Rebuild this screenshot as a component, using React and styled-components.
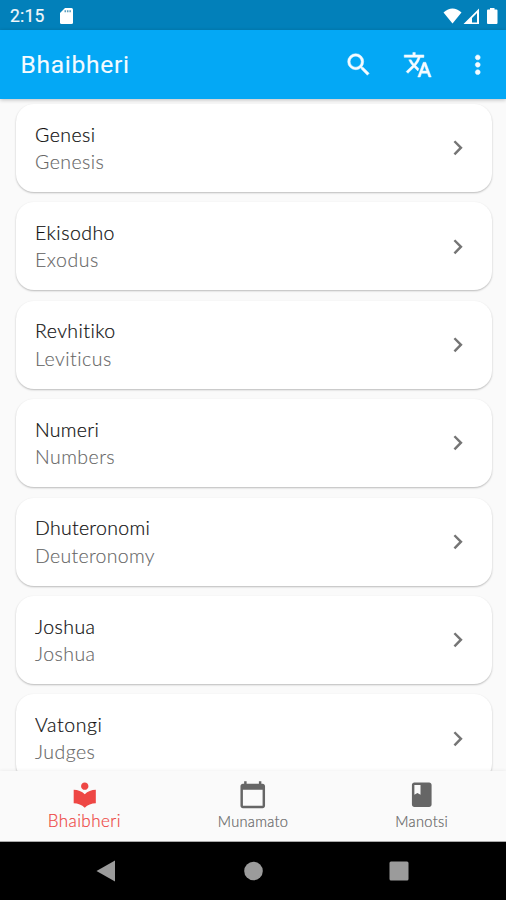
import React from "react";
import styled, { createGlobalStyle } from "styled-components";
import {
  MdSearch, MdTranslate, MdMoreVert, MdChevronRight,
  MdLocalLibrary, MdCalendarToday, MdClass,
} from "react-icons/md";

const GlobalStyle = createGlobalStyle`
  * { box-sizing: border-box; }
  body { margin: 0; background: #fafafa; }
`;

const Screen = styled.div`
  width: 506px;
  height: 900px;
  display: flex;
  flex-direction: column;
  overflow: hidden;
  background: #fafafa;
  font-family: Lato, sans-serif;
`;

const StatusBar = styled.header`
  flex: 0 0 30px;
  display: flex;
  align-items: center;
  padding: 1px 7px 0 10px;
  background: #0280ba;
  color: #f2f8fb;
  svg { display: block; }
`;

const Clock = styled.span`
  width: 50px;
  padding-top: 1px;
  font: 400 17.5px/20px Roboto, sans-serif;
  letter-spacing: 0.2px;
  -webkit-text-stroke: 0.2px currentColor;
`;

const StatusIcons = styled.div`
  display: flex;
  align-items: center;
  margin-left: auto;
`;

const AppBar = styled.div`
  flex: 0 0 69px;
  display: flex;
  align-items: center;
  padding: 0 14px 0 20.5px;
  background: #04a8f5;
  color: #f5fbff;
  position: relative;
  z-index: 1;
  box-shadow: 0 1px 4px rgba(0, 0, 0, 0.24);
`;

const Title = styled.h1`
  flex: 1;
  margin: 0;
  font: 400 24.6px/30px Roboto, sans-serif;
  letter-spacing: 0.7px;
  -webkit-text-stroke: 0.1px currentColor;
`;

const Actions = styled.div`
  display: flex;
  align-items: center;
  gap: 30px;
  svg {
    width: 29.5px;
    height: 29.5px;
    display: block;
  }
  path:not([fill="none"]) {
    stroke: currentColor;
    stroke-width: 0.4px;
  }
  path[fill="none"] { stroke: none; }
`;

const BookList = styled.main`
  flex: 1;
  min-height: 0;
  overflow: hidden;
  display: flex;
  flex-direction: column;
  gap: 10.4px;
  padding: 5px 14.5px 0 15.5px;
`;

const BookCard = styled.article`
  flex: 0 0 88px;
  display: flex;
  align-items: center;
  justify-content: space-between;
  padding: 0 19px 0 19.5px;
  border-radius: 18px;
  background: #fff;
  box-shadow: 0 1px 2px rgba(0, 0, 0, 0.26);
  svg { width: 29.5px; height: 29.5px; color: #757575; }
`;

const BookName = styled.div`
  font-size: 19.5px;
  line-height: 27.4px;
  font-weight: 300;
  color: ${(p) => (p.$muted ? "#666" : "#111")};
  letter-spacing: ${(p) => p.$spacing ?? 0.45}px;
  -webkit-text-stroke: ${(p) => (p.$muted ? 0.12 : 0.2)}px currentColor;
`;

const BottomNav = styled.nav`
  flex: 0 0 71px;
  display: grid;
  grid-template-columns: repeat(3, 1fr);
  background: #fafafa;
  box-shadow: 0 -1px 3px rgba(0, 0, 0, 0.05);
  border-bottom: 1px solid #aaa;
  position: relative;
`;

const NavItem = styled.div`
  display: flex;
  flex-direction: column;
  align-items: center;
  padding-top: 9px;
  color: ${(p) => (p.$active ? "#ee4744" : "#666")};
  svg { width: 29.5px; height: 29.5px; flex: none; }
`;

const NavLabel = styled.span`
  font-size: ${(p) => (p.$active ? 17 : 14.6)}px;
  line-height: ${(p) => (p.$active ? 22 : 24)}px;
  font-weight: 300;
  letter-spacing: ${(p) => (p.$active ? 0.45 : 0.3)}px;
  -webkit-text-stroke: 0.2px currentColor;
`;

const SystemBar = styled.footer`
  flex: 0 0 58px;
  display: flex;
  justify-content: space-between;
  align-items: center;
  padding: 0 97px 0 96px;
  background: #000;
  svg { display: block; }
`;

const books = [
  { name: "Genesi", english: "Genesis" },
  { name: "Ekisodho", english: "Exodus", englishSpacing: 0.5 },
  { name: "Revhitiko", english: "Leviticus", englishSpacing: 0.5 },
  { name: "Numeri", english: "Numbers", spacing: 0.3 },
  { name: "Dhuteronomi", english: "Deuteronomy", spacing: 0.3, englishSpacing: 0.3 },
  { name: "Joshua", english: "Joshua" },
  { name: "Vatongi", english: "Judges", spacing: 0.6 },
];

const tabs = [
  { label: "Bhaibheri", Icon: MdLocalLibrary, active: true },
  { label: "Munamato", Icon: MdCalendarToday },
  { label: "Manotsi", Icon: MdClass },
];

export default function App() {
  return (
    <Screen>
      <GlobalStyle />
      <StatusBar>
        <Clock>2:15</Clock>
        <svg width="13" height="16" viewBox="0 0 13 16">
          <path fill="#fff" d="M5 0h6.500Q13 0 13 1.500v13q0 1.500-1.500 1.500h-10Q0 16 0 14.500V5z" />
          <path fill="#5d9fbd" d="M4.500 2.200h1.600v2H4.500zM7 2.200h1.500v2H7zM9.400 2.200h1.500v2H9.400z" />
        </svg>
        <StatusIcons>
          <svg width="56" height="18" viewBox="0 0 56 18" fill="#fff">
            <path d="M0.500 5.500Q9.500 -2.500 18.500 5.500L9.500 16.500z" />
            <path fillRule="evenodd" d="M20.500 17L36 1.500V17zM29 15.500h5V6l-5 5z" />
            <path d="M47 1h4.500v1.500h2q1 0 1 1V16q0 1-1 1h-8.500q-1 0-1-1V3.500q0-1 1-1h2z" />
          </svg>
        </StatusIcons>
      </StatusBar>
      <AppBar>
        <Title>Bhaibheri</Title>
        <Actions>
          <MdSearch />
          <MdTranslate />
          <MdMoreVert />
        </Actions>
      </AppBar>
      <BookList>
        {books.map((b) => (
          <BookCard key={b.name}>
            <div>
              <BookName $spacing={b.spacing}>{b.name}</BookName>
              <BookName $muted $spacing={b.englishSpacing}>{b.english}</BookName>
            </div>
            <MdChevronRight />
          </BookCard>
        ))}
      </BookList>
      <BottomNav>
        {tabs.map(({ label, Icon, active }) => (
          <NavItem key={label} $active={active}>
            <Icon />
            <NavLabel $active={active}>{label}</NavLabel>
          </NavItem>
        ))}
      </BottomNav>
      <SystemBar>
        <svg width="20" height="22" viewBox="0 0 20 22"><path d="M0.500 11L19 0.500v21z" fill="#9b9b9b" /></svg>
        <svg width="20" height="20" viewBox="0 0 20 20"><circle cx="10.500" cy="10" r="9.300" fill="#9b9b9b" /></svg>
        <svg width="20" height="20" viewBox="0 0 20 20"><rect x="0.500" y="0.500" width="19" height="19" rx="1.500" fill="#9b9b9b" /></svg>
      </SystemBar>
    </Screen>
  );
}
